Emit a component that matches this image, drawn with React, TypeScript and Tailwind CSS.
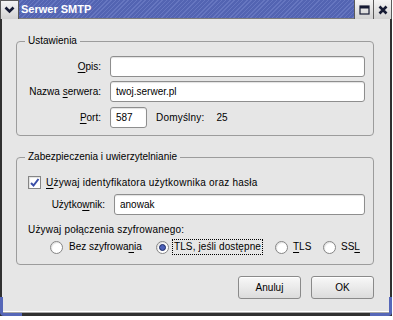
import React from 'react';

const U = ({ children }: { children: React.ReactNode }) => (
    <span className="underline underline-offset-[2px]">{children}</span>
);

const TextField = ({ value = '', className = '' }: { value?: string, className?: string }) => (
    <input
        readOnly
        defaultValue={value}
        className={`h-[21px] bg-white border border-[#8e8e8e] rounded-[3px] px-[5px] outline-none shadow-[inset_0_1px_1px_rgba(0,0,0,0.12)] ${className}`}
    />
);

const Radio = ({ checked }: { checked?: boolean }) => (
    <span className="w-[13px] h-[13px] shrink-0 rounded-full bg-white border border-[#858585] flex items-center justify-center shadow-[inset_1px_1px_1px_rgba(0,0,0,0.12)]">
        {checked && <span className="w-[7px] h-[7px] rounded-full bg-[#4c60b8] border border-[#1d2a66]" />}
    </span>
);

const TitleButton = ({ children }: { children: React.ReactNode }) => (
    <div className="w-[19px] h-[19px] flex items-center justify-center bg-gradient-to-b from-[#f4f4f4] to-[#d2d2d2] border-l border-[#5a5a5a]">
        {children}
    </div>
);

const DialogButton = ({ children }: { children: React.ReactNode }) => (
    <button className="w-[63px] h-[23px] border border-[#8a8a8a] rounded-[3px] bg-gradient-to-b from-[#f8f8f8] to-[#dcdcdc] shadow-[inset_0_1px_0_#ffffff]">
        {children}
    </button>
);

export default function App() {
    return (
        <div className="w-[393px] h-[320px] bg-white font-['Liberation_Sans',Arial,sans-serif] text-[10px] leading-[12px] text-black">
            <div className="relative w-[392px] flex flex-col">
                {/* title bar */}
                <div className="h-[19px] flex border-b border-[#7c7c7c] bg-[#e6e6e6]">
                    <div className="w-[19px] h-[19px] flex items-center justify-center bg-gradient-to-b from-[#f4f4f4] to-[#d2d2d2] border border-[#5a5a5a] border-b-0">
                        <svg width="11" height="8" viewBox="0 0 11 8">
                            <path d="M1.5 1.5 L5.5 5.5 L9.5 1.5" stroke="#151a33" strokeWidth="2.6" fill="none" />
                        </svg>
                    </div>
                    <div className="flex-1 flex items-center pl-[2px] bg-[repeating-linear-gradient(135deg,#5364b2_0px,#5364b2_2px,#6676c0_2px,#6676c0_3px)] text-white font-bold text-[11px]">
                        Serwer SMTP
                    </div>
                    <TitleButton>
                        <svg width="11" height="10" viewBox="0 0 11 10">
                            <rect x="1" y="1" width="9" height="8" stroke="#151a33" strokeWidth="1.2" fill="none" />
                            <rect x="1" y="1" width="9" height="2.5" fill="#151a33" />
                        </svg>
                    </TitleButton>
                    <div className="w-[19px] h-[19px] flex items-center justify-center bg-gradient-to-b from-[#f4f4f4] to-[#d2d2d2] border-x border-[#5a5a5a]">
                        <svg width="10" height="10" viewBox="0 0 10 10">
                            <path d="M1.5 1.5 L8.5 8.5 M8.5 1.5 L1.5 8.5" stroke="#151a33" strokeWidth="2.6" />
                        </svg>
                    </div>
                </div>

                {/* body */}
                <div className="flex flex-col bg-[#e6e6e6] border-l-2 border-r-2 border-[#303030] pl-[14px] pr-[16px] pt-[16px] pb-[12px]">
                    <fieldset className="border border-[#9c9c9c] rounded-[4px] pb-[7px]">
                        <legend className="ml-[8px] px-[3px]">Ustawienia</legend>
                        <div className="pt-[9px] pl-[10px] pr-[8px] flex flex-col gap-[4px]">
                            <div className="flex items-center">
                                <span className="w-[74px] mr-[9px] text-right"><U>O</U>pis:</span>
                                <TextField className="flex-1 min-w-0" />
                            </div>
                            <div className="flex items-center">
                                <span className="w-[74px] mr-[9px] text-right">Nazwa <U>s</U>erwera:</span>
                                <TextField className="flex-1 min-w-0" value="twoj.serwer.pl" />
                            </div>
                            <div className="flex items-center mt-px">
                                <span className="w-[74px] mr-[9px] text-right"><U>P</U>ort:</span>
                                <TextField className="w-[37px]" value="587" />
                                <span className="ml-[9px] tracking-[0.2px]">Domyślny:</span>
                                <span className="ml-[12px]">25</span>
                            </div>
                        </div>
                    </fieldset>

                    <fieldset className="mt-[15px] border border-[#9c9c9c] rounded-[4px] pb-[9px]">
                        <legend className="ml-[8px] px-[3px]">Zabezpieczenia i uwierzytelnianie</legend>
                        <div className="pt-[12px] pl-[11px] pr-[8px] flex flex-col">
                            <div className="h-[15px] flex items-center gap-[5px]">
                                <span className="w-[13px] h-[13px] bg-white border border-[#858585] flex items-center justify-center shadow-[inset_1px_1px_1px_rgba(0,0,0,0.12)]">
                                    <svg width="11" height="11" viewBox="0 0 11 11">
                                        <path d="M2 6 L4.5 8.5 L9.5 2" stroke="#3a4ea8" strokeWidth="2" fill="none" />
                                    </svg>
                                </span>
                                <span className="tracking-[0.25px]"><U>U</U>żywaj identyfikatora użytkownika oraz hasła</span>
                            </div>
                            <div className="flex items-center mt-[4px]">
                                <span className="w-[77px] mr-[9px] text-right">Użytko<U>w</U>nik:</span>
                                <TextField className="flex-1 min-w-0" value="anowak" />
                            </div>
                            <div className="mt-[9px] tracking-[0.2px]">Używaj połączenia szyfrowanego:</div>
                            <div className="mt-[3px] h-[16px] pl-[22px] grid grid-cols-[106px_119px_48px_auto] items-center">
                                <div className="flex items-center gap-[6px]">
                                    <Radio />
                                    <span>Bez szyfrowa<U>n</U>ia</span>
                                </div>
                                <div className="flex items-center gap-[3px]">
                                    <Radio checked />
                                    <span className="border border-dotted border-black px-[1px] py-[1px] tracking-[0.1px]">TLS, jeśli dostępne</span>
                                </div>
                                <div className="flex items-center gap-[5px]">
                                    <Radio />
                                    <span><U>T</U>LS</span>
                                </div>
                                <div className="flex items-center gap-[5px]">
                                    <Radio />
                                    <span>SS<U>L</U></span>
                                </div>
                            </div>
                        </div>
                    </fieldset>

                    <div className="mt-[11px] flex justify-end gap-[10px]">
                        <DialogButton>Anuluj</DialogButton>
                        <DialogButton>OK</DialogButton>
                    </div>
                </div>
                <div className="h-px bg-white border-l-2 border-r-2 border-[#303030]" />
                <div className="h-px bg-[#a8a8a8] border-l-2 border-r-2 border-[#303030]" />
                <div className="h-[3px] bg-[#303030]" />

                {/* blue frame corners */}
                <div className="absolute left-0 bottom-0 w-[22px] h-[19px] border-l-[3px] border-b-[3px] border-[#5667b8] rounded-bl-[4px]" />
                <div className="absolute right-0 bottom-0 w-[22px] h-[19px] border-r-[3px] border-b-[3px] border-[#5667b8] rounded-br-[4px]" />
            </div>
        </div>
    );
}
